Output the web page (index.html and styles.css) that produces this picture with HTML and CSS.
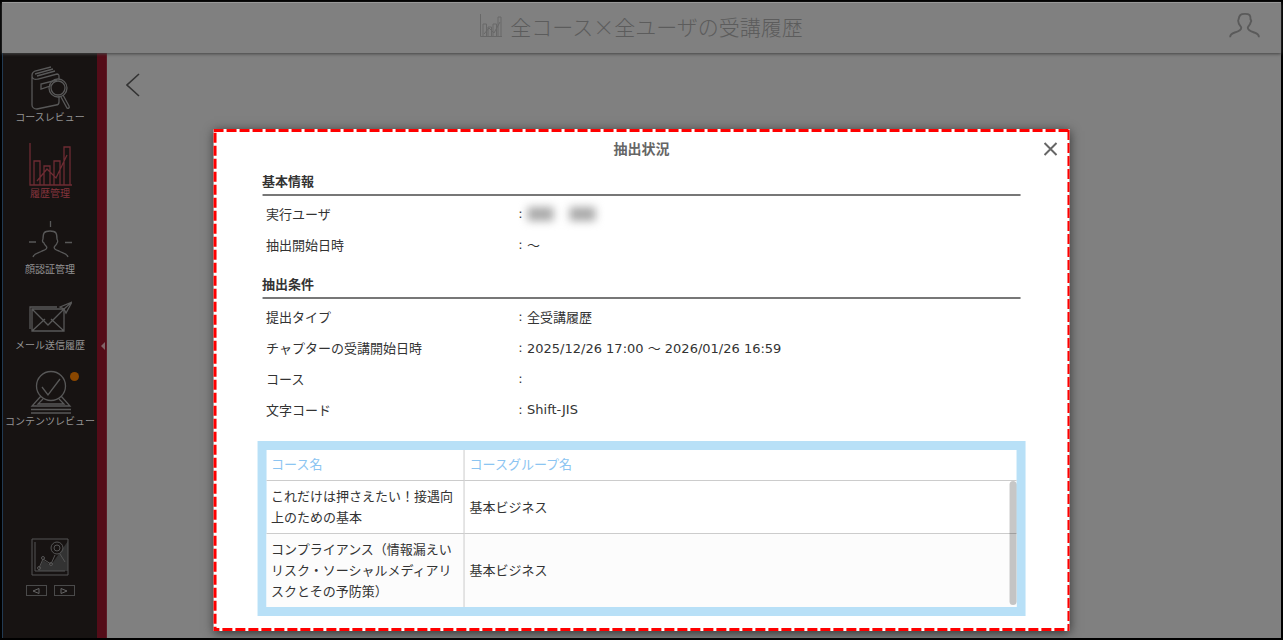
FILE: index.html
```html
<!DOCTYPE html>
<html lang="ja">
<head>
<meta charset="utf-8">
<meta name="viewport" content="width=device-width, initial-scale=1">
<title>全コース×全ユーザの受講履歴</title>
<link rel="stylesheet" href="styles.css">
</head>
<body>
<div class="app">
  <header class="topbar">
    <h1 class="topbar-title">
      <svg class="title-icon" viewBox="0 0 22 23" aria-hidden="true"><path d="M.5 0v22.500H22M3 22V10h3.500v12M8 22v-9h3.500v9M13 22V10h3.500v12M18 22V3h3v19M4 20l5-6 5 5 6-11"/></svg>
      <span>全コース×全ユーザの受講履歴</span>
    </h1>
    <button class="user-button" type="button" aria-label="ユーザ">
      <svg viewBox="0 0 34 28" aria-hidden="true"><path d="M1 26c0-3 2-4 5-5 4-1 7-2 7-5 0-2-3-3-3-6 0-1-1-2 0-3 1-5 2-6 7-6s6 1 6 6c1 1 1 2 0 3 0 3-3 4-3 6 0 3 4 4 7 5 3 1 5 2 5 5"/></svg>
    </button>
  </header>
  <div class="body">
    <aside class="sidebar">
      <nav class="nav">
        <a class="nav-item" href="#review">
          <svg viewBox="-2 0 44 44" aria-hidden="true"><path d="M29 30v6c0 2-1 3-3 3L7 43c-3 0-5-2-5-4V9c0-2 1-3 3-4L21 1M2 10c0 3 3 4 6 3l19-5c2 0 2 1 2 3v2M5 8l18-5M7 10l18-5M20 18v2l-9 3v-5l16-4"/><circle cx="28" cy="22" r="9"/><circle cx="28" cy="22" r="7"/><path d="m31 31 6 11c1 1 3 0 2-2l-6-11"/></svg>
          <span>コースレビュー</span>
        </a>
        <a class="nav-item active" href="#history">
          <svg viewBox="0 0 44 44" aria-hidden="true"><path d="M2 1v42h42M6 43V19h6v24M16 43V24h6v19M26 43V19h6v24M36 43V5h6v38M9 39l10-12 9 9 11-23"/></svg>
          <span>履歴管理</span>
        </a>
        <a class="nav-item" href="#face">
          <svg viewBox="0 0 44 44" aria-hidden="true"><path d="M22.500 3v6M1 24h7M37 24.500h7M5 39c1-4 6-4 9-6 4-1 6-3 4-5-1-1-2-2-2-3-2-1-2-2-1-4 0-6 1-8 7-8s7 2 7 8c1 2 1 3 0 4 0 1-1 2-2 3-2 2 0 4 4 5 3 2 8 2 9 6"/></svg>
          <span>顔認証管理</span>
        </a>
        <a class="nav-item" href="#mail">
          <svg viewBox="0 0 44 44" aria-hidden="true"><path d="M4 15h32v22H4zM4 15l16 16 16-16M4 37l13-12M36 37 23 25"/><path d="M2 35V13h27M44 8l-12 5 4 2 2 4zM44 8l-8 7"/></svg>
          <span>メール送信履歴</span>
        </a>
        <a class="nav-item" href="#contents">
          <svg viewBox="0 0 44 44" aria-hidden="true"><circle cx="23" cy="16" r="14.500"/><path d="m14 17 6 8 12-16M13 26 4 36h38L33 26M15 29l-5 5h26l-5-5M3 39.500h40M3 43h40"/></svg>
          <span>コンテンツレビュー</span>
          <i class="notice"></i>
        </a>
      </nav>
      <div class="tools">
        <svg class="analysis" viewBox="0 0 38 38" aria-hidden="true"><path class="shade" d="m7 33 5-11 8 5L37 3v30z"/><path d="M1 1h36v36H1zM4 4v29h30M8 30l4-9 8 5 4-9M29 16l5 8"/><circle cx="26" cy="10" r="6"/><circle cx="26" cy="10" r="3"/><circle cx="8" cy="30" r="1.500"/><circle cx="12" cy="20" r="1.500"/><circle cx="20" cy="26" r="1.500"/></svg>
        <div class="pager">
          <button type="button" aria-label="前へ"><svg viewBox="0 0 8 8" aria-hidden="true"><path d="M7 1.500v5L1 4z"/></svg></button>
          <button type="button" aria-label="次へ"><svg viewBox="0 0 8 8" aria-hidden="true"><path d="M1 1.500v5L7 4z"/></svg></button>
        </div>
      </div>
    </aside>
    <button class="rail" type="button" aria-label="メニューを閉じる"><svg viewBox="0 0 4 8" aria-hidden="true"><path d="M4 0v8L0 4z"/></svg></button>
    <main class="page">
      <button class="back" type="button" aria-label="戻る"><svg viewBox="0 0 14 24" aria-hidden="true"><path d="M13 1 1 12l12 11"/></svg></button>
    </main>
  </div>

  <section class="dialog" role="dialog" aria-labelledby="dialog-title">
    <svg class="outline" aria-hidden="true"><rect width="100%" height="100%"/></svg>
    <header class="dialog-head">
      <h2 id="dialog-title">抽出状況</h2>
      <button class="close" type="button" aria-label="閉じる"><svg viewBox="0 0 14 14" aria-hidden="true"><path d="m1 1 12 12M13 1 1 13"/></svg></button>
    </header>
    <div class="dialog-body">
      <h3>基本情報</h3>
      <dl>
        <div><dt>実行ユーザ</dt><dd><span class="masked"><i></i><i></i></span></dd></div>
        <div><dt>抽出開始日時</dt><dd>～</dd></div>
      </dl>
      <h3>抽出条件</h3>
      <dl>
        <div><dt>提出タイプ</dt><dd>全受講履歴</dd></div>
        <div><dt>チャプターの受講開始日時</dt><dd>2025/12/26 17:00 ～ 2026/01/26 16:59</dd></div>
        <div><dt>コース</dt><dd></dd></div>
        <div><dt>文字コード</dt><dd>Shift-JIS</dd></div>
      </dl>
    </div>
    <div class="table-frame">
      <table>
        <thead><tr><th class="name">コース名</th><th>コースグループ名</th></tr></thead>
        <tbody>
          <tr><td>これだけは押さえたい！接遇向上のための基本</td><td>基本ビジネス</td></tr>
          <tr><td>コンプライアンス（情報漏えいリスク・ソーシャルメディアリスクとその予防策）</td><td>基本ビジネス</td></tr>
        </tbody>
      </table>
      <div class="thumb"></div>
    </div>
  </section>
</div>
</body>
</html>
```

FILE: styles.css
```css
* { box-sizing: border-box; }
body {
  margin: 0;
  font-family: "DejaVu Sans", "Noto Sans CJK JP", sans-serif;
  font-size: 13px;
  color: #333;
}
button { padding: 0; border: 0; background: none; cursor: pointer; }
svg { display: block; fill: none; stroke: currentColor; }
h1, h2, h3, dl, dd { margin: 0; }

.app {
  position: relative;
  display: flex;
  flex-direction: column;
  min-height: 100vh;
  border: 2px solid #000;
  background: #808080;
}
.topbar {
  display: grid;
  grid-template-columns: 1fr auto 1fr;
  align-items: center;
  height: 51px;
  padding: 0 20px 5px;
  border-top: 1px solid #999;
  box-shadow: 0 1px 3px #444;
  z-index: 1;
}
.topbar-title {
  grid-column: 2;
  display: flex;
  align-items: center;
  gap: 8px;
  font-family: "Noto Sans CJK JP", sans-serif;
  font-size: 21px;
  line-height: 30px;
  font-weight: 300;
  color: #5c5c5c;
}
.title-icon { width: 22px; height: 23px; color: #686868; }
.user-button { justify-self: end; color: #5a5a5a; }
.user-button svg { width: 32px; height: 26px; stroke-width: 2; }

.body { display: flex; flex: 1; }
.sidebar {
  display: flex;
  flex-direction: column;
  justify-content: space-between;
  width: 95px;
  padding: 13px 0 42px;
  border-left: 1px solid #223a52;
  background: #171312;
}
.nav { display: flex; flex-direction: column; gap: 18px; }
.nav-item {
  position: relative;
  display: flex;
  flex-direction: column;
  align-items: center;
  font-family: "Noto Sans CJK JP", sans-serif;
  font-size: 10px;
  line-height: 14px;
  white-space: nowrap;
  text-decoration: none;
  color: #949494;
}
.nav-item svg { width: 44px; height: 44px; color: #585858; stroke-width: 1.3; }
.nav-item.active { color: #86343d; }
.nav-item.active svg { color: #6e2c33; }
.notice {
  position: absolute;
  top: 2px;
  right: 18px;
  width: 9px;
  height: 9px;
  border-radius: 50%;
  background: #8a4700;
}
.tools { display: flex; flex-direction: column; align-items: center; gap: 9px; color: #555; }
.analysis { width: 38px; height: 38px; }
.analysis .shade { fill: #333; stroke: none; }
.pager { display: flex; gap: 7px; }
.pager button {
  display: grid;
  place-items: center;
  width: 21px;
  height: 11px;
  border: 1px solid #4a4a4a;
  color: #666;
}
.pager svg { width: 8px; height: 8px; }
.rail {
  display: grid;
  align-content: center;
  width: 10px;
  border-right: 1px solid #5e1a25;
  background: #540c18;
}
.rail svg { width: 4px; height: 8px; margin-left: 4px; fill: #806468; stroke: none; }
.page { flex: 1; padding: 20px 19px; }
.back { color: #333; }
.back svg { width: 14px; height: 24px; stroke-width: 1.6; }

.dialog {
  position: absolute;
  z-index: 2;
  top: 127px;
  left: 50%;
  width: 67%;
  padding-bottom: 15px;
  transform: translateX(-50%);
  background: #fff;
  box-shadow: 0 2px 10px #333;
}
.outline { position: absolute; inset: 0; width: 100%; height: 100%; pointer-events: none; }
.outline rect { stroke: #f00; stroke-width: 6; stroke-dasharray: 10 3; }
.dialog-head {
  display: grid;
  grid-template-columns: 1fr auto 1fr;
  align-items: center;
  height: 39px;
  padding: 0 12px;
}
.dialog-head h2 { grid-column: 2; font-size: 14px; line-height: 20px; color: #666; }
.close { justify-self: end; color: #666; }
.close svg { width: 14px; height: 14px; stroke-width: 2; }
.dialog-body { padding: 0 49px 5px; }
h3 {
  padding: 4px 0 2px;
  border-bottom: 2px solid #777;
  font-size: 13px;
  line-height: 20px;
}
dl { padding: 2px 4px 11px; }
dl > div { display: flex; align-items: center; height: 31px; }
dt { width: 252px; }
dd { display: flex; align-items: center; gap: 4px; }
dd::before { content: ":"; width: 5px; text-align: center; }
.masked { display: flex; gap: 16px; filter: blur(4px); }
.masked i { width: 26px; height: 14px; background: #aaa; }

.table-frame {
  position: relative;
  margin: 0 44px;
  border: 9px solid #b8e0f7;
}
table { width: 100%; border-collapse: collapse; table-layout: fixed; }
th, td {
  padding: 5px;
  line-height: 21px;
  text-align: left;
  font-weight: 400;
  border-bottom: 1px solid #ccc;
}
th:first-child, td:first-child { border-right: 1px solid #ccc; }
th { padding: 4px 5px 5px; color: #8cc5f2; }
th.name { width: 198px; }
tbody tr:last-child td { border-bottom: 0; background: #fcfcfc; }
.thumb {
  position: absolute;
  top: 31px;
  right: 0;
  bottom: 2px;
  width: 7px;
  border-radius: 4px;
  background: rgba(0, 0, 0, 0.22);
}
```
